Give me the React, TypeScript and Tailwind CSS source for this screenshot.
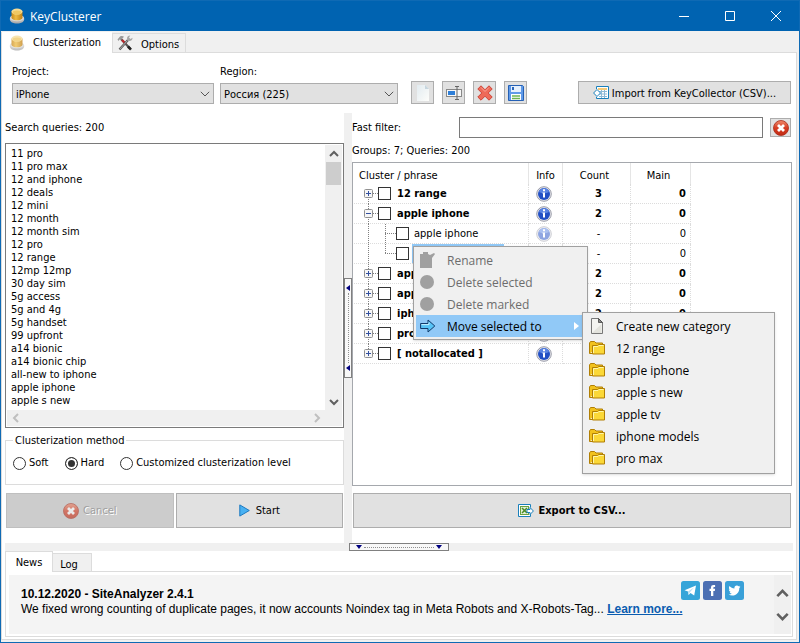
import { useState } from 'react';
import type { ReactNode } from 'react';

const queries = [
    '11 pro', '11 pro max', '12 and iphone', '12 deals', '12 mini', '12 month', '12 month sim',
    '12 pro', '12 range', '12mp 12mp', '30 day sim', '5g access', '5g and 4g', '5g handset',
    '99 upfront', 'a14 bionic', 'a14 bionic chip', 'all-new to iphone', 'apple iphone', 'apple s new',
];

type Row = { name: string; count: string; main: string; level: number; open?: boolean; first?: boolean; last?: boolean; menu?: boolean };

const rows: Row[] = [
    { name: '12 range', count: '3', main: '0', level: 0, first: true },
    { name: 'apple iphone', count: '2', main: '0', level: 0, open: true },
    { name: 'apple iphone', count: '-', main: '0', level: 1 },
    { name: '', count: '-', main: '0', level: 1, last: true, menu: true },
    { name: 'apple s new', count: '2', main: '0', level: 0 },
    { name: 'apple tv', count: '2', main: '0', level: 0 },
    { name: 'iphone models', count: '2', main: '0', level: 0 },
    { name: 'pro max', count: '', main: '', level: 0 },
    { name: '[ notallocated ]', count: '', main: '', level: 0, last: true },
];

const categories = ['12 range', 'apple iphone', 'apple s new', 'apple tv', 'iphone models', 'pro max'];

/* ---------- icons ---------- */

const AppIcon = ({ className }: { className?: string }) => (
    <svg width="16" height="16" viewBox="0 0 16 16" className={className} aria-hidden="true">
        <defs>
            <linearGradient id="gold" x1="0" x2="1">
                <stop offset="0" stopColor="#c98a1c" />
                <stop offset=".4" stopColor="#eebb44" />
                <stop offset="1" stopColor="#c08116" />
            </linearGradient>
            <linearGradient id="base" x1="0" x2="0" y1="0" y2="1">
                <stop offset="0" stopColor="#f2f2f2" />
                <stop offset="1" stopColor="#a4a4a4" />
            </linearGradient>
        </defs>
        <path d="M.8 11C.8 8 4 6.500 8 6.500S15.200 8 15.200 11c0 3-3.200 4.500-7.200 4.500S.8 14 .8 11z" fill="url(#base)" />
        <ellipse cx="8" cy="10" rx="6.600" ry="3.300" fill="#dcdcdc" />
        <path d="M2.500 3.500h11v6.200c0 1.500-2.400 2.600-5.500 2.600s-5.500-1.100-5.500-2.600z" fill="url(#gold)" />
        <ellipse cx="8" cy="3.600" rx="5.500" ry="3" fill="#f6dc96" />
        <ellipse cx="8" cy="4.400" rx="4.300" ry="1.900" fill="#f0c862" />
    </svg>
);

const ToolsIcon = () => (
    <svg width="16" height="16" viewBox="0 0 16 16" fill="none" aria-hidden="true">
        <path d="M4 4l9 9.500" stroke="#555" strokeWidth="2.200" />
        <path d="M5 5l4 4" stroke="#c0282d" strokeWidth="2.200" />
        <path d="M2.500 14.500L11 5" stroke="#5c5c5c" strokeWidth="2.400" />
        <path d="M3 14L10 6" stroke="#a8a8a8" strokeWidth="1" />
        <path d="M0.500 4.500L3 1.500c1.500-.8 3-.6 4 .2L4 5 2.500 4.500 1.500 6z" fill="#9a9a9a" />
        <path d="M10 3.500c0-1.800 1.300-3 3.300-3L12 2.500l1.500 1.500 2-1.200c.2 2-1.200 3.400-3.200 3.200L10.500 6z" fill="#a6a6a6" />
        <path d="M11 11.500l3 3.200" stroke="#222" strokeWidth="2.600" />
    </svg>
);

const PageIcon = () => (
    <svg width="16" height="16" viewBox="0 0 16 16" aria-hidden="true">
        <path d="M2.500 .5h7l4 4v11h-11z" fill="#f4f4f1" stroke="#777" />
        <path d="M3 15L12.500 6v9z" fill="#e3e3dd" />
        <path d="M9.500 .5v4h4z" fill="#888" stroke="#444" strokeWidth=".8" />
    </svg>
);

const NewIcon = () => (
    <svg width="16" height="16" viewBox="0 0 16 16" aria-hidden="true">
        <defs>
            <linearGradient id="sheet" x1="0" x2="1" y1="0" y2="1">
                <stop offset="0" stopColor="#e2ebf0" />
                <stop offset="1" stopColor="#fdfdfa" />
            </linearGradient>
        </defs>
        <path d="M2 0h8l4 4v12H2z" fill="url(#sheet)" />
        <path d="M10 0v4h4z" fill="#c6d5de" />
    </svg>
);

const RenameIcon = () => (
    <svg width="16" height="16" viewBox="0 0 16 16" fill="none" aria-hidden="true">
        <rect x=".5" y="4.500" width="15" height="7" fill="#f8f8f8" stroke="#888" />
        <rect x="2" y="6" width="7" height="4" fill="#2f7fd8" />
        <path d="M9 1.500h4M9 14.500h4M11 1.500v13" stroke="#666" />
    </svg>
);

const CrossIcon = () => (
    <svg width="16" height="16" viewBox="0 0 16 16" aria-hidden="true">
        <path
            d="M4 .8L8 4.800l4-4L15.200 4l-4 4 4 4-3.200 3.200-4-4-4 4L.8 12l4-4-4-4z"
            fill="#ee6a58"
            stroke="#cf4438"
            strokeLinejoin="round"
        />
        <path d="M4 2.500L8 6.500l4-4" fill="none" stroke="#f8a598" />
    </svg>
);

const SaveIcon = () => (
    <svg width="16" height="16" viewBox="0 0 16 16" aria-hidden="true">
        <path d="M.5 .5h14l1 1v14H.5z" fill="#5f9ae8" stroke="#2560b5" />
        <rect x="3" y="1" width="10" height="6" fill="#e6f0fc" />
        <path d="M4 2h2v3H4z" fill="#2d66b8" />
        <rect x="3" y="9" width="10" height="6" fill="#fff" />
        <path d="M4 11h8M4 13.500h8" stroke="#6db552" strokeWidth="1.400" />
    </svg>
);

const ImportIcon = () => (
    <svg width="16" height="14" viewBox="0 0 16 14" fill="none" aria-hidden="true">
        <path d="M3.500 3V.5h12v12h-12V11" fill="#fff" stroke="#1a80bb" />
        <path d="M5 3h9" stroke="#f1b84b" strokeWidth="1.500" />
        <path d="M6 5.500h8M6 8h8M6 10.500h8M8.500 4v8M11.500 4v8" stroke="#8db9d6" />
        <path d="M.6 7L4 3.500 7.500 7 4 10.500z" fill="#fff" stroke="#1a80bb" />
    </svg>
);

const ExportIcon = () => (
    <svg width="16" height="14" viewBox="0 0 16 14" fill="none" aria-hidden="true">
        <path d="M12.500 3.500V.5H.5v12h12v-2.500" fill="#fff" stroke="#1a80bb" />
        <rect x="2.500" y="2.500" width="8" height="8" fill="#e3f0d8" stroke="#6ba33e" />
        <path d="M4 4l5 5M9 4L4 9" stroke="#4d8d2a" strokeWidth="1.500" />
        <path d="M15.400 7L12 3.500V5.500H9v3h3v2z" fill="#fff" stroke="#1a80bb" />
    </svg>
);

const StopIcon = () => (
    <svg width="16" height="16" viewBox="0 0 16 16" aria-hidden="true">
        <defs>
            <linearGradient id="stop" x1="0" x2="0" y1="0" y2="1">
                <stop offset="0" stopColor="#f08a6c" />
                <stop offset=".5" stopColor="#d63c22" />
                <stop offset="1" stopColor="#c12b14" />
            </linearGradient>
        </defs>
        <circle cx="8" cy="8" r="7.500" fill="url(#stop)" stroke="#a82a18" strokeWidth=".8" />
        <path d="M5 5l6 6M11 5l-6 6" stroke="#fff" strokeWidth="2.800" />
    </svg>
);

const PlayIcon = () => (
    <svg width="11" height="13" viewBox="0 0 11 13" aria-hidden="true">
        <path d="M.8 .9l9.500 5.600L.8 12.100z" fill="#48b1f2" stroke="#1c79c0" strokeLinejoin="round" />
    </svg>
);

const InfoIcon = ({ faded }: { faded?: boolean }) => (
    <svg width="16" height="16" viewBox="0 0 16 16" className={faded ? 'opacity-50' : ''} role="img" aria-label="Info">
        <circle cx="8" cy="8" r="7.300" fill="#e8e8ee" stroke="#9a9ca8" />
        <circle cx="8" cy="8" r="6" fill="#2350c4" />
        <path d="M3 6a5.200 5.200 0 0 1 10 0c-3 1.600-7 1.600-10 0z" fill="#5b84e2" />
        <path d="M7 3.200h2v2H7zM6.500 6.500H9v5H7v-4h-.5z" fill="#fff" />
    </svg>
);

const FolderIcon = () => (
    <svg width="16" height="14" viewBox="0 0 16 14" aria-hidden="true">
        <path d="M.5 12.500V2l1-1.500h4L7 2h6.500v2" fill="#f2c21c" stroke="#b17f05" />
        <path d="M3.500 4.500h5l1-1h6v9.500H3.500z" fill="#fbd837" stroke="#b17f05" />
        <path d="M4.500 12V5.500h4.500l1-1h4.500" fill="none" stroke="#fff6a8" />
        <path d="M.5 12.500h3" stroke="#b17f05" />
    </svg>
);

const MoveIcon = () => (
    <svg width="16" height="14" viewBox="0 0 16 14" aria-hidden="true">
        <path d="M.6 4.500H8V1l6.800 6L8 13V9.500H.6z" fill="#58c4f7" stroke="#123a6b" strokeLinejoin="round" />
        <path d="M1.500 5.600H9V3.400" fill="none" stroke="#c8f1ff" />
    </svg>
);

const Chevron = ({ dir, color = '#606060', size = 10 }: { dir: 'up' | 'down' | 'left' | 'right'; color?: string; size?: number }) => {
    const paths = { up: 'M1 7l4-4 4 4', down: 'M1 3l4 4 4-4', left: 'M7 1L3 5l4 4', right: 'M3 1l4 4-4 4' };
    return (
        <svg width={size} height={size} viewBox="0 0 10 10" fill="none" aria-hidden="true">
            <path d={paths[dir]} stroke={color} strokeWidth="2" />
        </svg>
    );
};

/* ---------- small parts ---------- */

const Dropdown = ({ id, label, value, width }: { id: string; label: string; value: string; width: string }) => (
    <div className={`flex flex-col ${width}`}>
        <label htmlFor={id} className="h-4 leading-[18px]">{label}</label>
        <div className="relative mt-1">
            <select id={id} className="h-[21px] w-full appearance-none border border-[#adadad] bg-[#e1e1e1] pt-px pl-[3px]">
                <option>{value}</option>
            </select>
            <svg width="10" height="6" viewBox="0 0 10 6" fill="none" className="pointer-events-none absolute top-2 right-1" aria-hidden="true">
                <path d="M.8 .8L5 5 9.200 .8" stroke="#555" />
            </svg>
        </div>
    </div>
);

const ToolButton = ({ label, children }: { label: string; children: ReactNode }) => (
    <button aria-label={label} className="flex size-[23px] items-center justify-center border border-[#adadad] bg-[#e1e1e1]">
        {children}
    </button>
);

const TreeLines = ({ row }: { row: Row }) => {
    const line = { stroke: '#808080', strokeDasharray: '1 1' };
    if (row.level === 1) {
        return (
            <svg width="42" height="20" className="shrink-0" aria-hidden="true">
                <path d="M14.500 0v20" {...line} />
                <path d={row.last ? 'M31.500 0v10' : 'M31.500 0v20'} {...line} />
                <path d="M31 9.500h11" {...line} />
            </svg>
        );
    }
    return (
        <svg width="24" height="20" className="shrink-0" aria-hidden="true">
            {!row.first && <path d="M14.500 0v5" {...line} />}
            {!row.last && <path d="M14.500 15v5" {...line} />}
            <path d="M19 9.500h5" {...line} />
            <rect x="10.500" y="5.500" width="8" height="8" rx="1" fill="#f6f6f6" stroke="#919191" />
            <path d={row.open ? 'M12 9.500h5' : 'M12 9.500h5M14.500 7v5'} stroke="#3350a0" />
        </svg>
    );
};

const MenuItem = ({ icon, label, disabled, active, children }: { icon: ReactNode; label: string; disabled?: boolean; active?: boolean; children?: ReactNode }) => (
    <li className={`relative ${active ? 'bg-[#91c9f7]' : ''}`}>
        <button
            disabled={disabled}
            className={`flex h-[22px] w-full items-center text-left ${disabled ? 'text-[#6d6d6d]' : 'text-black'}`}
        >
            <span className="flex w-[31px] shrink-0 pl-1">{icon}</span>
            <span>{label}</span>
            {active && (
                <svg width="5" height="8" viewBox="0 0 5 8" className="mr-1.5 ml-auto" aria-hidden="true">
                    <path d="M0 0l5 4-5 4z" fill="#fff" />
                </svg>
            )}
        </button>
        {children}
    </li>
);

const Dot = () => <span className="size-[14px] rounded-full bg-[#a0a0a0]" />;

const ContextMenu = () => (
    <ul className="absolute top-[2px] left-[59px] z-10 w-[175px] border border-[#a0a0a0] bg-[#f0f0f0] p-[2px] font-['Open_Sans',sans-serif] text-[12px] shadow-sm">
        <MenuItem
            disabled
            label="Rename"
            icon={
                <svg width="15" height="16" viewBox="0 0 15 16" aria-hidden="true">
                    <path d="M0 2h3V0h5v2l2 1 4-2 1 1-3 4v10H0z" fill="#a0a0a0" />
                </svg>
            }
        />
        <MenuItem disabled label="Delete selected" icon={<Dot />} />
        <MenuItem disabled label="Delete marked" icon={<Dot />} />
        <MenuItem active label="Move selected to" icon={<MoveIcon />}>
            <ul className="absolute top-[-3px] left-full ml-[-3px] w-[193px] border border-[#a0a0a0] bg-[#f0f0f0] p-[2px] pb-1 shadow-sm">
                <MenuItem label="Create new category" icon={<PageIcon />} />
                {categories.map((name) => (
                    <MenuItem key={name} label={name} icon={<FolderIcon />} />
                ))}
            </ul>
        </MenuItem>
    </ul>
);

const Handle = ({ vertical }: { vertical?: boolean }) =>
    vertical ? (
        <button aria-label="Collapse left panel" className="flex h-[100px] w-2 flex-col items-center justify-between border border-[#808080] bg-[#f8f8f8] py-1.5">
            <svg width="4" height="6" aria-hidden="true"><path d="M4 0v6L0 3z" fill="#000080" /></svg>
            <span className="h-[70px] border-l border-dotted border-[#909090]" />
            <svg width="4" height="6" aria-hidden="true"><path d="M4 0v6L0 3z" fill="#000080" /></svg>
        </button>
    ) : (
        <button aria-label="Collapse bottom panel" className="flex h-2 w-[100px] items-center justify-between border border-[#808080] bg-[#f8f8f8] px-1.5">
            <svg width="6" height="4" aria-hidden="true"><path d="M0 0h6L3 4z" fill="#000080" /></svg>
            <span className="w-[70px] border-t border-dotted border-[#909090]" />
            <svg width="6" height="4" aria-hidden="true"><path d="M0 0h6L3 4z" fill="#000080" /></svg>
        </button>
    );

/* ---------- sections ---------- */

const TitleBar = () => (
    <header className="flex h-[30px] items-center bg-[#0063b1] pl-2 text-white">
        <AppIcon />
        <h1 className="ml-[5px] flex-1 font-['Open_Sans',sans-serif] text-[12px]">KeyClusterer</h1>
        <button aria-label="Minimize" className="flex h-full w-[46px] items-center justify-center">
            <svg width="10" height="10" stroke="#fff"><path d="M0 5.500h10" /></svg>
        </button>
        <button aria-label="Maximize" className="flex h-full w-[46px] items-center justify-center">
            <svg width="10" height="10" stroke="#fff" fill="none"><path d="M.5 .5h9v9h-9z" /></svg>
        </button>
        <button aria-label="Close" className="flex h-full w-[46px] items-center justify-center">
            <svg width="10" height="10" stroke="#fff"><path d="M0 0l10 10M10 0L0 10" /></svg>
        </button>
    </header>
);

const QueryPanel = () => {
    const [method, setMethod] = useState('Hard');

    return (
        <section className="flex w-[342px] shrink-0 flex-col pb-[15px] pl-[3px]">
            <label htmlFor="queries" className="mt-1.5 h-4 leading-[18px]">Search queries: 200</label>
            <div className="mt-2 flex flex-1 flex-col border border-[#7a7a7a] p-px">
                <div className="flex flex-1">
                    <textarea
                        id="queries"
                        readOnly
                        wrap="off"
                        rows={20}
                        defaultValue={queries.join('\n')}
                        className="block min-w-0 flex-1 resize-none overflow-hidden pt-0.5 pb-0.5 pl-1 leading-[13px] outline-none"
                    />
                    <div className="flex w-[17px] flex-col items-center bg-[#f0f0f0]">
                        <div className="flex h-[17px] items-center"><Chevron dir="up" /></div>
                        <div className="h-[23px] w-[15px] bg-[#cdcdcd]" />
                        <div className="mt-auto flex h-[17px] items-center"><Chevron dir="down" /></div>
                    </div>
                </div>
                <div className="flex h-4 items-center justify-between bg-[#f0f0f0] pr-5 pl-1">
                    <Chevron dir="left" color="#bfbfbf" />
                    <Chevron dir="right" color="#bfbfbf" />
                </div>
            </div>

            <fieldset className="mt-1.5 h-[51px] border border-[#dcdcdc] pl-[7px]">
                <legend className="px-0.5 leading-[13px]">Clusterization method</legend>
                <div className="flex gap-4 pt-[9px]">
                    {['Soft', 'Hard', 'Customized clusterization level'].map((name) => (
                        <label key={name} className="flex items-center gap-[3px] leading-[14px]">
                            <input
                                type="radio"
                                name="method"
                                checked={method === name}
                                onChange={() => setMethod(name)}
                                className="size-[13px] appearance-none rounded-full border border-[#333] bg-white checked:bg-[#333] checked:shadow-[inset_0_0_0_2px_#fff]"
                            />
                            {name}
                        </label>
                    ))}
                </div>
            </fieldset>

            <div className="mt-2 flex gap-0.5 px-px">
                <button disabled className="flex h-[35px] flex-1 items-center justify-center gap-1 border border-[#bfbfbf] bg-[#cccccc] text-[#a0a0a0] text-shadow-[1px_1px_0_#fff]">
                    <span className="opacity-60"><StopIcon /></span>
                    Cancel
                </button>
                <button className="flex h-[35px] flex-1 items-center justify-center gap-1.5 border border-[#adadad] bg-[#e1e1e1]">
                    <PlayIcon />
                    Start
                </button>
            </div>
        </section>
    );
};

const ClusterTable = () => (
    <div className="mt-1 flex-1 border border-[#a5a8ad]">
        <table className="ml-px w-[337px] table-fixed border-separate border-spacing-0">
            <colgroup>
                <col className="w-[175px]" />
                <col className="w-[34px]" />
                <col className="w-[68px]" />
                <col className="w-[60px]" />
            </colgroup>
            <thead>
                <tr className="h-5 *:border-r *:border-[#e5e5e5] *:p-0 *:pt-1 *:font-normal">
                    <th className="text-left"><span className="pl-[5px]">Cluster / phrase</span></th>
                    <th>Info</th>
                    <th><span className="pr-1">Count</span></th>
                    <th><span className="pr-1">Main</span></th>
                </tr>
            </thead>
            <tbody>
                {rows.map((row, i) => (
                    <tr
                        key={i}
                        className={`h-5 *:border-r *:border-b *:border-dotted *:border-[#dcdcdc] *:p-0 ${row.level === 0 ? 'font-bold' : ''}`}
                    >
                        <td className="relative">
                            <div className="flex h-[19px] items-center">
                                <TreeLines row={row} />
                                <input
                                    type="checkbox"
                                    aria-label={row.name || 'Selected phrase'}
                                    className="size-[13px] shrink-0 appearance-none border border-[#333] bg-white checked:bg-[#333]"
                                />
                                {row.menu ? (
                                    <span className="ml-[3px] h-[19px] w-[92px] bg-[#91c9f7]" />
                                ) : (
                                    <span className={`whitespace-nowrap ${row.level === 0 ? 'pl-1.5' : 'pl-[5px]'}`}>{row.name}</span>
                                )}
                            </div>
                            {row.menu && <ContextMenu />}
                        </td>
                        <td>
                            <div className="flex justify-center pr-1"><InfoIcon faded={row.level === 1} /></div>
                        </td>
                        <td className="text-center"><span className="pl-1">{row.count}</span></td>
                        <td className="text-right"><span className="pr-1">{row.main}</span></td>
                    </tr>
                ))}
            </tbody>
        </table>
    </div>
);

const ClusterPanel = () => (
    <section className="flex min-w-0 flex-1 flex-col pr-1 pb-[15px]">
        <div className="mt-1 flex items-center">
            <label htmlFor="filter" className="w-[107px]">Fast filter:</label>
            <input id="filter" type="text" className="h-[21px] min-w-0 flex-1 border border-[#7a7a7a] bg-white px-1 outline-none" />
            <button aria-label="Clear filter" className="mr-px ml-[7px] flex h-[19px] w-[21px] items-center justify-center border border-[#adadad] bg-[#e1e1e1]">
                <StopIcon />
            </button>
        </div>
        <p className="mt-1 h-4 leading-[18px]">Groups: 7; Queries: 200</p>
        <ClusterTable />
        <button className="mx-px mt-[7px] flex h-[35px] items-center justify-center gap-1 border border-[#adadad] bg-[#e1e1e1] font-bold">
            <ExportIcon />
            Export to CSV...
        </button>
    </section>
);

const NewsPanel = () => (
    <section className="mx-[3px] mb-0.5">
        <div className="flex items-end">
            <button className="relative z-[1] mb-[-1px] h-[21px] w-12 border border-b-0 border-[#dcdcdc] bg-white">News</button>
            <button className="h-[18px] w-[39px] border border-b-0 border-l-0 border-[#dcdcdc] bg-[#f0f0f0] pt-0.5 pr-1.5">Log</button>
        </div>
        <div className="border border-[#dcdcdc] p-[3px] pr-px pb-0.5">
            <div className="flex h-[59px] bg-[#f4f4f4] font-['Liberation_Sans',sans-serif] text-[12px]">
                <div className="min-w-0 flex-1 pt-3 pl-3 leading-[15px]">
                    <h2 className="font-bold">10.12.2020 - SiteAnalyzer 2.4.1</h2>
                    <p className="whitespace-nowrap">
                        We fixed wrong counting of duplicate pages, it now accounts Noindex tag in Meta Robots and X-Robots-Tag...{' '}
                        <a href="#news" className="font-bold text-[#0a5cb0] underline">Learn more...</a>
                    </p>
                </div>
                <div className="mr-[30px] flex gap-[3px] pt-1.5">
                    <a href="#telegram" aria-label="Telegram" className="h-[19px]">
                        <svg width="19" height="19" viewBox="0 0 19 19">
                            <rect width="19" height="19" rx="2.500" fill="#36a5d9" />
                            <path d="M3.500 9.300L15 4.500l-1.800 10-3.700-2.600-1.900 2-.6-3.400z" fill="#fff" />
                            <path d="M7 10.500L13 6.500l-4.300 5-1.100 2.400z" fill="#b9def2" />
                        </svg>
                    </a>
                    <a href="#facebook" aria-label="Facebook" className="h-[19px]">
                        <svg width="19" height="19" viewBox="0 0 19 19">
                            <rect width="19" height="19" rx="2.500" fill="#4c6fb3" />
                            <path d="M8 15V10H6.500V7.800H8V6.500C8 4.800 9 4 10.600 4h1.500v2h-1c-.6 0-.8.300-.8.800v1h1.800L11.800 10h-1.500v5z" fill="#fff" />
                        </svg>
                    </a>
                    <a href="#twitter" aria-label="Twitter" className="h-[19px]">
                        <svg width="19" height="19" viewBox="0 0 19 19">
                            <rect width="19" height="19" rx="2.500" fill="#39a0d8" />
                            <path d="M4.500 5c1.300 1.500 3 2.300 4.900 2.400C9.200 5.600 10.400 4.500 11.900 4.500c.7 0 1.300.3 1.700.7l1.500-.5-.9 1.300 1.300-.3-1.200 1.200c.1 4-2.700 7.600-7 7.600-1.400 0-2.600-.4-3.700-1.100 1.200.1 2.400-.2 3.300-.9-1.100 0-1.900-.7-2.200-1.600h1C4.600 10.500 3.900 9.600 3.900 8.500l1 .3C3.800 8 3.700 6.300 4.500 5z" fill="#fff" />
                        </svg>
                    </a>
                </div>
                <div className="flex w-[17px] flex-col items-center justify-center gap-[10px] bg-[#f0f0f0]">
                    <Chevron dir="up" size={13} />
                    <Chevron dir="down" size={13} />
                </div>
            </div>
        </div>
    </section>
);

const App = () => (
    <div className="flex min-h-screen flex-col border border-[#0f6ab4] bg-[#f0f0f0] font-['DejaVu_Sans_Condensed','DejaVu_Sans',sans-serif] text-[11px] leading-[17px] text-black">
        <TitleBar />

        <nav className="flex items-end pt-px">
            <button className="relative z-[1] mb-[-1px] flex h-[21px] w-[111px] items-center gap-2 border-l border-[#dcdcdc] bg-white pl-[7px]">
                <AppIcon className="opacity-75" />
                Clusterization
            </button>
            <button className="flex h-[19px] w-[74px] items-center gap-2 border border-b-0 border-[#dcdcdc] pl-1">
                <ToolsIcon />
                <span className="pt-0.5">Options</span>
            </button>
        </nav>

        <main className="mr-0.5 mb-0.5 flex flex-1 flex-col border border-[#dcdcdc] bg-white">
            <div className="flex items-end pt-[10px] pr-[5px] pb-[9px] pl-[10px]">
                <Dropdown id="project" label="Project:" value="iPhone" width="w-[202px]" />
                <div className="ml-1.5">
                    <Dropdown id="region" label="Region:" value="Россия (225)" width="w-[178px]" />
                </div>
                <div className="ml-[13px] flex gap-2">
                    <ToolButton label="New project"><NewIcon /></ToolButton>
                    <ToolButton label="Rename project"><RenameIcon /></ToolButton>
                    <ToolButton label="Delete project"><CrossIcon /></ToolButton>
                    <ToolButton label="Save project"><SaveIcon /></ToolButton>
                </div>
                <button className="ml-auto flex h-[23px] w-[213px] items-center justify-center gap-[3px] border border-[#adadad] bg-[#e1e1e1]">
                    <ImportIcon />
                    <span className="pt-0.5">Import from KeyCollector (CSV)...</span>
                </button>
            </div>

            <div className="flex flex-1">
                <QueryPanel />
                <div className="flex w-2 flex-col items-center justify-center bg-[#f0f0f0]">
                    <Handle vertical />
                </div>
                <ClusterPanel />
            </div>

            <div className="mx-[3px] flex h-2 justify-center bg-[#f0f0f0]">
                <Handle />
            </div>

            <NewsPanel />
        </main>
    </div>
);

export default App;
